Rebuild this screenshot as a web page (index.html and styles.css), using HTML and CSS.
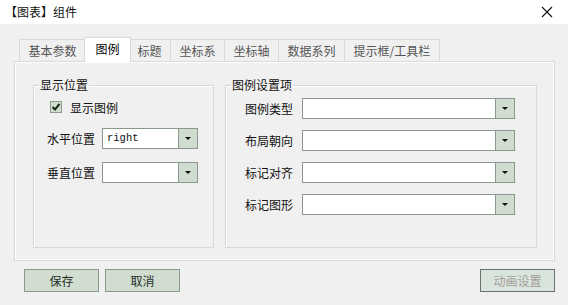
FILE: index.html
```html
<!DOCTYPE html>
<html lang="zh-CN">
<head>
    <meta charset="UTF-8">
    <meta name="viewport" content="width=device-width, initial-scale=1.0">
    <title>【图表】组件</title>
    <link rel="stylesheet" href="styles.css">
</head>
<body>

    <div class="window">
        <div class="titlebar">
            <span class="title">【图表】组件</span>
            <svg class="close" width="12" height="12" viewBox="0 0 12 12">
                <path d="M1 1 L11 11 M11 1 L1 11" stroke="#111" stroke-width="1.1" fill="none"/>
            </svg>
        </div>

        <div class="content">
            <div class="tabs">
                <div class="tab">基本参数</div>
                <div class="tab active">图例</div>
                <div class="tab">标题</div>
                <div class="tab">坐标系</div>
                <div class="tab">坐标轴</div>
                <div class="tab">数据系列</div>
                <div class="tab">提示框/工具栏</div>
            </div>

            <div class="panel">
                <fieldset class="group group-left">
                    <legend>显示位置</legend>
                    <div class="rows">
                        <label class="check-row">
                            <span class="checkbox">
                                <svg width="10" height="10" viewBox="0 0 10 10">
                                    <path d="M1.5 5 L4 7.5 L8.5 2" stroke="#1c2a1c" stroke-width="2" fill="none"/>
                                </svg>
                            </span>
                            显示图例
                        </label>
                        <div class="field">
                            <span class="label">水平位置</span>
                            <div class="combo"><span class="value">right</span><span class="arrow"></span></div>
                        </div>
                        <div class="field">
                            <span class="label">垂直位置</span>
                            <div class="combo"><span class="value"></span><span class="arrow"></span></div>
                        </div>
                    </div>
                </fieldset>

                <fieldset class="group group-right">
                    <legend>图例设置项</legend>
                    <div class="rows">
                        <div class="field">
                            <span class="label">图例类型</span>
                            <div class="combo"><span class="value"></span><span class="arrow"></span></div>
                        </div>
                        <div class="field">
                            <span class="label">布局朝向</span>
                            <div class="combo"><span class="value"></span><span class="arrow"></span></div>
                        </div>
                        <div class="field">
                            <span class="label">标记对齐</span>
                            <div class="combo"><span class="value"></span><span class="arrow"></span></div>
                        </div>
                        <div class="field">
                            <span class="label">标记图形</span>
                            <div class="combo"><span class="value"></span><span class="arrow"></span></div>
                        </div>
                    </div>
                </fieldset>
            </div>

            <div class="actions">
                <button>保存</button>
                <button>取消</button>
                <button class="push-right" disabled>动画设置</button>
            </div>
        </div>
    </div>

</body>
</html>
```

FILE: styles.css
```css
body {
    margin: 0;
    background-color: #f0f0f0;
    font-family: "Noto Sans CJK SC", "Noto Sans", sans-serif;
    font-size: 12px;
    color: #111111;
}
.window {
    width: 568px;
    height: 305px;
    overflow: hidden;
}
.titlebar {
    height: 24px;
    background-color: #ffffff;
    display: flex;
    align-items: center;
    justify-content: space-between;
    padding: 0 15px 0 5px;
}
.title {
    font-size: 12px;
    line-height: 1;
}
.content {
    padding: 0 13px 0 14px;
}
.tabs {
    display: flex;
    align-items: flex-end;
    margin-top: 15px;
    padding-left: 5px;
    height: 22px;
}
.tab {
    height: 21px;
    line-height: 21px;
    padding: 0 8.5px;
    color: #555555;
    border: 1px solid #d9d9d9;
    border-bottom: none;
    border-left: none;
    background-color: #f0f0f0;
}
.tab:first-child {
    border-left: 1px solid #d9d9d9;
}
.tab.active {
    height: 24px;
    line-height: 22px;
    margin: 0 -2px -1px -2px;
    padding: 0 10.5px;
    background-color: #ffffff;
    color: #000000;
    border-left: 1px solid #d9d9d9;
    position: relative;
    z-index: 1;
}
.panel {
    display: flex;
    gap: 11px;
    padding: 16px 17px 0 18px;
    border: 1px solid #d9d9d9;
    box-shadow: inset 1px 1px 0 #ffffff, inset -1px -1px 0 #ffffff;
    box-sizing: border-box;
    height: 200px;
}
.group {
    margin: 0;
    padding: 0;
    height: 170px;
    box-sizing: border-box;
    border: 1px solid #d8d8d8;
    box-shadow: inset 1px 1px 0 #ffffff;
}
.group legend {
    margin-left: 5px;
    padding: 0 1px;
    line-height: 14px;
    color: #111111;
}
.group-left {
    width: 181px;
}
.group-right {
    width: 312px;
}
.rows {
    display: flex;
    flex-direction: column;
}
.group-left .rows {
    padding: 8px 0 0 13px;
}
.group-right .rows {
    padding: 6px 0 0 19px;
    gap: 11px;
}
.check-row {
    display: flex;
    align-items: center;
    gap: 8px;
    margin-left: 3px;
    height: 14px;
    margin-bottom: 14px;
}
.checkbox {
    width: 10px;
    height: 10px;
    border: 1px solid #8d9d8d;
    background-color: #d0dcd0;
    display: flex;
    align-items: center;
    justify-content: center;
}
.field {
    display: flex;
    align-items: center;
    height: 21px;
}
.group-left .field {
    margin-bottom: 13px;
}
.group-left .label {
    width: 55px;
}
.group-right .label {
    width: 57px;
}
.combo {
    display: flex;
    height: 21px;
    box-sizing: border-box;
    border: 1px solid #8a9a8a;
    background-color: #ffffff;
}
.group-left .combo {
    width: 96px;
}
.group-right .combo {
    width: 213px;
}
.combo .value {
    flex: 1;
    padding-left: 4px;
    font-family: "Liberation Mono", "DejaVu Sans Mono", monospace;
    font-size: 10.5px;
    line-height: 19px;
}
.combo .arrow {
    width: 18px;
    border-left: 1px solid #8a9a8a;
    background-color: #cfdccf;
    position: relative;
}
.combo .arrow::after {
    content: "";
    position: absolute;
    left: 6px;
    top: 8px;
    border-left: 3px solid transparent;
    border-right: 3px solid transparent;
    border-top: 3px solid #111111;
}
.actions {
    display: flex;
    gap: 6px;
    margin-top: 8px;
    padding: 0 0 0 10px;
}
button {
    width: 75px;
    height: 23px;
    padding: 0;
    background-color: #d0ddd0;
    border: 1px solid #8a9a8a;
    font-family: "Noto Sans CJK SC", "Noto Sans", sans-serif;
    font-size: 12px;
    color: #1f2f1f;
}
button:disabled {
    background-color: #d9e5dc;
    border-color: #6c706c;
    color: #a39e9a;
}
.push-right {
    margin-left: auto;
}
```
